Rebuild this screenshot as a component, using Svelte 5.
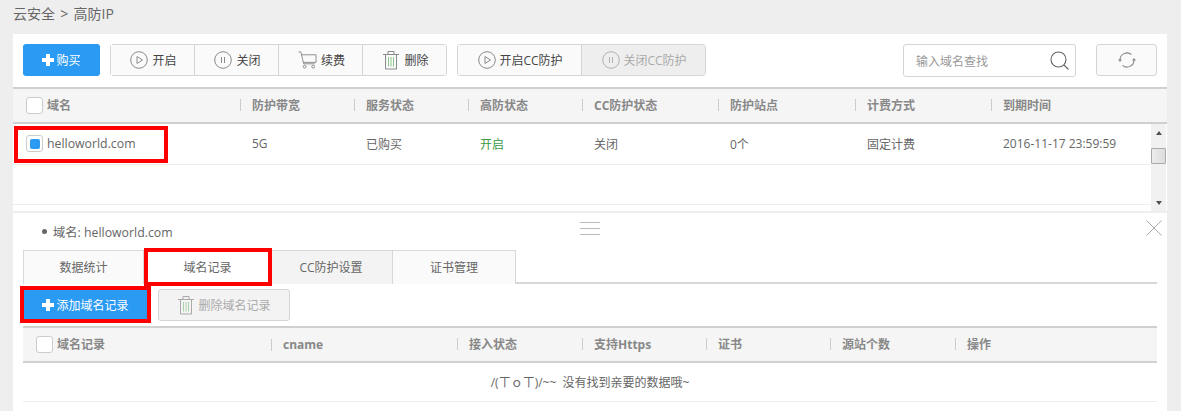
<script>
  const mainCols = ["防护带宽", "服务状态", "高防状态", "CC防护状态", "防护站点", "计费方式", "到期时间"];
  const recordCols = ["cname", "接入状态", "支持Https", "证书", "源站个数", "操作"];
  const tabs = ["数据统计", "域名记录", "CC防护设置", "证书管理"];
  const actions = [
    { label: "开启", icon: "play" },
    { label: "关闭", icon: "pause" },
    { label: "续费", icon: "cart" },
    { label: "删除", icon: "trash" },
  ];
</script>

{#snippet icon(name)}
  {#if name === "play"}
    <svg width="18" height="18" viewBox="0 0 18 18" fill="none" stroke="#8a8a8a" stroke-width="1">
      <circle cx="9" cy="9" r="8.300" />
      <path d="M7 5.500v7l5.500-3.500z" />
    </svg>
  {:else if name === "pause"}
    <svg width="18" height="18" viewBox="0 0 18 18" fill="none" stroke="#8a8a8a" stroke-width="1">
      <circle cx="9" cy="9" r="8.300" />
      <path d="M7.500 6v6M10.500 6v6" />
    </svg>
  {:else if name === "cart"}
    <svg width="19" height="20" viewBox="0 0 20 20" fill="none" stroke="#8a8a8a" stroke-width="1">
      <path d="M0.500 1.500h2.500l3 12.500h11.500M3.500 4.500h15.500v8H5.500" />
      <circle cx="7" cy="17" r="1.500" />
      <circle cx="16" cy="17" r="1.500" />
    </svg>
  {:else if name === "trash"}
    <svg width="18" height="20" viewBox="0 0 18 20" fill="none" stroke="#8a8a8a" stroke-width="1">
      <path d="M1 4.500h16M6 4.500V1.500h6v3M3.500 4.500v14.500h11V4.500" />
      <path d="M6.500 7v9.500M9 7v9.500M11.500 7v9.500" stroke="#8cc58c" />
    </svg>
  {/if}
{/snippet}

<div class="page">
  <div class="crumb">云安全&nbsp; &gt; &nbsp;高防IP</div>

  <section class="panel">
    <div class="toolbar">
      <button class="btn primary buy"><span class="plus"></span>购买</button>
      <div class="group">
        {#each actions as a}
          <button class="btn seg">{@render icon(a.icon)}{a.label}</button>
        {/each}
      </div>
      <div class="group cc">
        <button class="btn seg">{@render icon("play")}开启CC防护</button>
        <button class="btn seg off">{@render icon("pause")}关闭CC防护</button>
      </div>
      <div class="search">
        <span>输入域名查找</span>
        <svg width="20" height="20" viewBox="0 0 20 20" fill="none" stroke="#666" stroke-width="1.100">
          <circle cx="8.500" cy="8.500" r="7.500" />
          <path d="M14 14l4.500 4.500" />
        </svg>
      </div>
      <button class="btn refresh" aria-label="刷新">
        <svg width="18" height="18" viewBox="0 0 18 18" fill="none" stroke="#888" stroke-width="1.100">
          <path d="M2 9a7 7 0 0 1 11.500-5.400M16 9a7 7 0 0 1-11.500 5.400" />
          <path d="M0 8.500h4L2 11zM14 9.500h4L16 7z" fill="#888" stroke="none" />
        </svg>
      </button>
    </div>

    <div class="thead main-grid">
      <div class="first"><span class="check"></span>域名</div>
      {#each mainCols as c}
        <div class="th">{c}</div>
      {/each}
    </div>

    <div class="list">
      <div class="rows">
        <div class="row main-grid">
          <div class="first name"><span class="check on"></span>helloworld.com</div>
          <div class="td">5G</div>
          <div class="td">已购买</div>
          <div class="td green">开启</div>
          <div class="td">关闭</div>
          <div class="td">0个</div>
          <div class="td">固定计费</div>
          <div class="td">2016-11-17 23:59:59</div>
        </div>
        <div class="row"></div>
        <span class="mark mark-row"></span>
      </div>
      <div class="scrollbar">
        <span class="arrow up"></span>
        <span class="thumb"></span>
        <span class="arrow down"></span>
      </div>
    </div>
  </section>

  <section class="detail">
    <span class="handle"></span>
    <svg class="close" width="16" height="16" viewBox="0 0 16 16" stroke="#aaa" stroke-width="1">
      <path d="M0.500 0.500l15 15M15.500 0.500l-15 15" />
    </svg>
    <div class="domain"><span class="dot"></span>域名: helloworld.com</div>

    <div class="tabs">
      {#each tabs as t, i}
        <div class="tab" class:active={i === 1} class:shade={i === 2}>{t}</div>
      {/each}
      <span class="mark mark-tab"></span>
    </div>

    <div class="actions">
      <button class="btn primary add"><span class="plus"></span>添加域名记录</button>
      <button class="btn remove">{@render icon("trash")}删除域名记录</button>
      <span class="mark mark-add"></span>
    </div>

    <div class="thead record-grid">
      <div class="first"><span class="check"></span>域名记录</div>
      {#each recordCols as c}
        <div class="th">{c}</div>
      {/each}
    </div>
    <div class="empty">/(ㄒｏㄒ)/~~ 没有找到亲要的数据哦~</div>
  </section>
</div>

<style>
  :global(body) {
    margin: 0;
    background: #eee;
  }
  .page {
    width: 1181px;
    height: 411px;
    overflow: hidden;
    box-sizing: border-box;
    padding: 0 14px 0 13px;
    font-family: "Open Sans", "Noto Sans CJK SC", sans-serif;
    font-size: 12px;
    color: #666;
  }
  .crumb {
    height: 34px;
    line-height: 27px;
    font-size: 14px;
    color: #666;
    word-spacing: -1px;
  }
  .panel {
    background: #fff;
  }

  .toolbar {
    display: flex;
    height: 32px;
    padding: 10px 10px 11px;
  }
  .btn {
    display: flex;
    align-items: center;
    justify-content: center;
    gap: 3px;
    box-sizing: border-box;
    height: 32px;
    padding: 0;
    border: 1px solid #d5d5d5;
    border-radius: 3px;
    background: #fafafa;
    font: inherit;
    color: #555;
  }
  .primary {
    border: none;
    background: #2b9af3;
    color: #fff;
    gap: 2px;
  }
  .buy {
    width: 77px;
  }
  .plus {
    display: inline-block;
    width: 12px;
    height: 12px;
    background:
      linear-gradient(#fff, #fff) center / 12px 4px no-repeat,
      linear-gradient(#fff, #fff) center / 4px 12px no-repeat;
  }
  .group {
    display: flex;
    margin-left: 10px;
    border: 1px solid #d5d5d5;
    border-radius: 3px;
    height: 30px;
  }
  .seg {
    width: 84px;
    height: 30px;
    padding-left: 2px;
    border: none;
    border-radius: 0;
    border-left: 1px solid #d5d5d5;
    gap: 4px;
    color: #444;
  }
  .seg:first-child {
    border-left: none;
    width: 83px;
  }
  .cc .seg {
    width: 124px;
    gap: 3px;
  }
  .cc .seg:first-child {
    width: 123px;
  }
  .off {
    background: #eee;
    color: #aaa;
  }
  .off svg {
    opacity: 0.6;
  }
  .search {
    display: flex;
    align-items: center;
    justify-content: space-between;
    box-sizing: border-box;
    width: 173px;
    height: 33px;
    margin-left: auto;
    padding: 0 5px 0 12px;
    border: 1px solid #d5d5d5;
    border-radius: 3px;
    color: #999;
  }
  .refresh {
    width: 61px;
    margin-left: 20px;
  }

  .thead {
    box-sizing: border-box;
    height: 37px;
    padding-bottom: 1px;
    background: #f5f5f5;
    border-top: 2px solid #d0d0d0;
    border-bottom: 2px solid #d0d0d0;
    font-weight: 700;
    color: #888;
    align-items: center;
  }
  .main-grid {
    display: grid;
    grid-template-columns: 227px 114px 114px 114px 136px 137px 136px 1fr;
    align-items: center;
  }
  .record-grid {
    display: grid;
    grid-template-columns: 248px 186px 125px 124px 124px 125px 1fr;
  }
  .first {
    display: flex;
    align-items: center;
    gap: 4px;
    padding-left: 13px;
  }
  .th {
    position: relative;
    padding-left: 12px;
  }
  .th::before {
    content: "";
    position: absolute;
    left: 0;
    top: 3px;
    height: 12px;
    border-left: 1px solid #ccc;
  }
  .check {
    box-sizing: border-box;
    display: flex;
    align-items: center;
    justify-content: center;
    width: 17px;
    height: 17px;
    background: #fff;
    border: 1px solid #ccc;
    border-radius: 3px;
  }
  .check.on::after {
    content: "";
    width: 10px;
    height: 10px;
    border-radius: 2px;
    background: #2b9af3;
  }

  .list {
    display: flex;
    height: 87px;
  }
  .rows {
    position: relative;
    flex: 1;
  }
  .row {
    box-sizing: border-box;
    height: 40px;
    border-bottom: 1px solid #eee;
  }
  .row:first-child {
    height: 41px;
    padding-bottom: 1px;
  }
  .name {
    font-size: 12.3px;
  }
  .td {
    padding-left: 12px;
  }
  .green {
    color: #3a9a45;
  }
  .scrollbar {
    display: flex;
    flex-direction: column;
    align-items: center;
    box-sizing: border-box;
    width: 15px;
    margin-right: 1px;
    height: 87px;
    background: #f1f1f1;
    padding: 0 0 6px;
  }
  .arrow {
    width: 0;
    height: 0;
    border-left: 3px solid transparent;
    border-right: 3px solid transparent;
  }
  .up {
    margin-top: 7px;
    border-bottom: 4px solid #505050;
  }
  .down {
    margin-top: auto;
    border-top: 4px solid #505050;
  }
  .thumb {
    box-sizing: border-box;
    width: 15px;
    height: 16px;
    margin-top: 13px;
    background: linear-gradient(90deg, #ececec, #dcdcdc);
    border: 1px solid #aaa;
    border-radius: 1px;
  }

  .detail {
    position: relative;
    height: 198px;
    margin-top: 2px;
    box-sizing: border-box;
    padding: 0 10px;
    background: #fff;
  }
  .domain {
    display: flex;
    align-items: center;
    height: 37px;
    padding-left: 19px;
    box-sizing: border-box;
    font-size: 12.3px;
  }
  .dot {
    width: 5px;
    height: 5px;
    margin-right: 6px;
    border-radius: 50%;
    background: #666;
  }
  .handle {
    position: absolute;
    left: 567px;
    top: 9px;
    width: 20px;
    height: 11px;
    border-top: 1px solid #bbb;
    border-bottom: 1px solid #bbb;
    background: linear-gradient(#bbb, #bbb) center / 100% 1px no-repeat;
  }
  .close {
    position: absolute;
    right: 5px;
    top: 7px;
  }
  .tabs {
    position: relative;
    display: flex;
    height: 34px;
    box-sizing: border-box;
    border-bottom: 2px solid #d8d8d8;
  }
  .tab {
    box-sizing: border-box;
    width: 123px;
    height: 34px;
    line-height: 34px;
    text-align: center;
    background: #fafafa;
    border: 1px solid #d8d8d8;
    border-left: none;
    border-bottom: none;
  }
  .tab:first-child {
    border-left: 1px solid #d8d8d8;
    width: 121px;
  }
  .tab.active {
    width: 128px;
    background: #fff;
  }
  .tab.shade {
    width: 121px;
    background: #f3f3f3;
    padding-right: 2px;
  }
  .actions {
    position: relative;
    display: flex;
    gap: 10px;
    height: 42px;
    padding-top: 5px;
    box-sizing: border-box;
  }
  .add {
    width: 125px;
    height: 31px;
    border-radius: 0;
  }
  .remove {
    width: 132px;
    background: #f3f3f3;
    color: #aaa;
  }
  .remove svg {
    opacity: 0.7;
  }
  .empty {
    height: 39px;
    line-height: 39px;
    text-align: center;
    border-bottom: 1px solid #eee;
    box-sizing: border-box;
    word-spacing: 3px;
  }

  .mark {
    position: absolute;
    box-sizing: border-box;
    border: 4px solid #f00;
    pointer-events: none;
  }
  .mark-row {
    left: 1px;
    top: 2px;
    width: 154px;
    height: 37px;
  }
  .mark-tab {
    left: 121px;
    top: -2px;
    width: 128px;
    height: 38px;
  }
  .mark-add {
    left: -3px;
    top: 2px;
    width: 131px;
    height: 37px;
  }
</style>
